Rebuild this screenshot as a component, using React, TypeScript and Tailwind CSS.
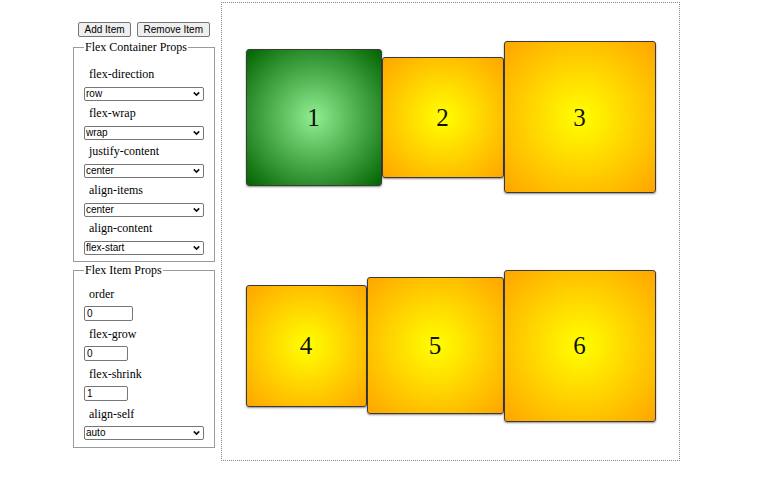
import React from "react";

const serif = "[font-family:'Liberation_Serif',serif]";
const sans = "[font-family:'Liberation_Sans',Arial,sans-serif]";

function Chevron() {
  return (
    <svg
      className="pointer-events-none absolute right-[4px] top-1/2 -translate-y-1/2"
      width="7"
      height="5"
      viewBox="0 0 7 5"
    >
      <path d="M0.8 0.9 L3.5 3.6 L6.2 0.9" fill="none" stroke="#111" strokeWidth="1.6" />
    </svg>
  );
}

function Sel({ value, options }: { value: string; options: string[] }) {
  return (
    <div className="relative w-[120px] h-[14px]">
      <select
        defaultValue={value}
        className={`${sans} block appearance-none w-full h-[14px] border border-[#767676] rounded-[2px] bg-white text-[10px] leading-[12px] py-0 pl-[1px] text-black outline-none`}
      >
        {options.map((o) => (
          <option key={o} value={o}>
            {o}
          </option>
        ))}
      </select>
      <Chevron />
    </div>
  );
}

function Label({ children, first }: { children: React.ReactNode; first?: boolean }) {
  return (
    <div className={`${serif} text-[12px] leading-[14px] text-black pl-[5px] ${first ? "mt-[5px]" : "mt-[4.5px]"} mb-[6px]`}>
      {children}
    </div>
  );
}

function Label2({ children }: { children: React.ReactNode }) {
  return (
    <div className={`${serif} text-[12px] leading-[14px] text-black pl-[5px] mt-[6px] mb-[5px]`}>
      {children}
    </div>
  );
}

const inputCls = `${sans} block h-[15px] border border-[#767676] rounded-[2px] text-[10px] leading-[13px] py-0 pl-[2px] text-black outline-none`;

const boxes = [
  { n: "1", cls: "w-[136px] h-[137px] bg-[radial-gradient(lightgreen,darkgreen)]" },
  { n: "2", cls: "w-[122px] h-[121px] bg-[radial-gradient(yellow,orange)]" },
  { n: "3", cls: "w-[152px] h-[152px] bg-[radial-gradient(yellow,orange)]" },
  { n: "4", cls: "w-[121px] h-[122px] bg-[radial-gradient(yellow,orange)]" },
  { n: "5", cls: "w-[137px] h-[137px] bg-[radial-gradient(yellow,orange)]" },
  { n: "6", cls: "w-[152px] h-[152px] bg-[radial-gradient(yellow,orange)]" },
];

export default function App() {
  return (
    <div className="w-[768px] h-[494px] bg-white flex items-start overflow-hidden">
      <div className="ml-[73px] mt-[22px] w-[141px] flex flex-col">
        <div className="flex gap-[6px] ml-[5px]">
          <button className={`${sans} h-[15px] px-[5.5px] text-[10px] leading-[13px] border border-[#767676] rounded-[2px] bg-[#efefef] text-black`}>
            Add Item
          </button>
          <button className={`${sans} h-[15px] px-[5.5px] text-[10px] leading-[13px] border border-[#767676] rounded-[2px] bg-[#efefef] text-black`}>
            Remove Item
          </button>
        </div>

        <fieldset className="mt-[3px] border border-[#9a9a9a] px-[10px] pt-[8px] pb-[6px]">
          <legend className={`${serif} px-[1px] text-[12px] leading-[14px] text-black`}>
            Flex Container Props
          </legend>
          <Label first>flex-direction</Label>
          <Sel value="row" options={["row", "row-reverse", "column", "column-reverse"]} />
          <Label>flex-wrap</Label>
          <Sel value="wrap" options={["nowrap", "wrap", "wrap-reverse"]} />
          <Label>justify-content</Label>
          <Sel value="center" options={["flex-start", "flex-end", "center", "space-between", "space-around"]} />
          <Label>align-items</Label>
          <Sel value="center" options={["flex-start", "flex-end", "center", "baseline", "stretch"]} />
          <Label>align-content</Label>
          <Sel value="flex-start" options={["flex-start", "flex-end", "center", "space-between", "space-around", "stretch"]} />
        </fieldset>

        <fieldset className="mt-[1px] border border-[#9a9a9a] px-[10px] pt-[4px] pb-[7px]">
          <legend className={`${serif} px-[1px] text-[12px] leading-[14px] text-black`}>
            Flex Item Props
          </legend>
          <Label2>order</Label2>
          <input defaultValue="0" className={`${inputCls} w-[49px]`} />
          <Label2>flex-grow</Label2>
          <input defaultValue="0" className={`${inputCls} w-[44px]`} />
          <Label2>flex-shrink</Label2>
          <input defaultValue="1" className={`${inputCls} w-[44px]`} />
          <Label2>align-self</Label2>
          <Sel value="auto" options={["auto", "flex-start", "flex-end", "center", "baseline", "stretch"]} />
        </fieldset>
      </div>

      <div className="ml-[7px] mt-[2px] w-[459px] h-[459px] border border-dotted border-[#8a8a8a] flex flex-row flex-wrap justify-center items-center content-around">
        {boxes.map((b) => (
          <div
            key={b.n}
            className={`${b.cls} ${serif} flex items-center justify-center border border-[#3a3a3a] rounded-[3px] shadow-[0_1px_2px_rgba(0,0,0,0.45)] text-[25px] text-[#111]`}
          >
            {b.n}
          </div>
        ))}
      </div>
    </div>
  );
}
